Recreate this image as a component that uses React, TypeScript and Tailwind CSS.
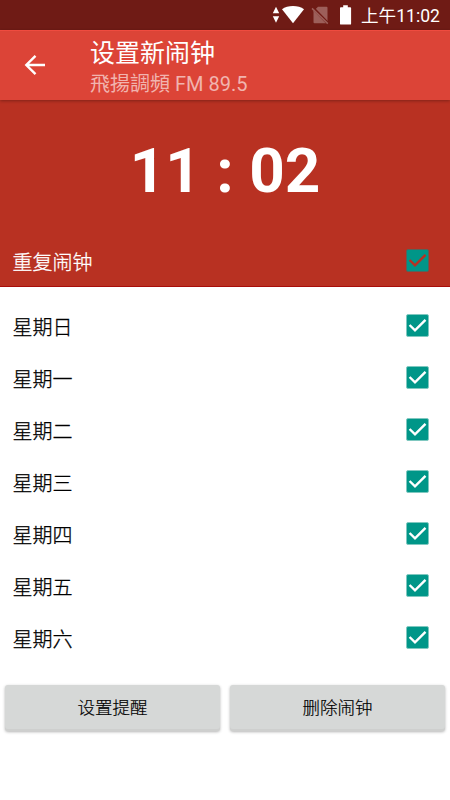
const days = ['星期日', '星期一', '星期二', '星期三', '星期四', '星期五', '星期六'];

function CheckBox({ mark, edge }: { mark: string; edge: string }) {
  return (
    <svg width="23" height="23" viewBox="0 0 23 23" className="mb-px block">
      <rect x="0.5" y="0.5" width="22" height="22" rx="1.5" fill="#009688" stroke={edge} strokeWidth="1" />
      <path d="M3.600 11 9 16.400 19.500 5.900" fill="none" stroke={mark} strokeWidth="2.400" />
    </svg>
  );
}

function StatusBar() {
  return (
    <header className="flex h-[30px] items-center justify-end bg-[#6f1b15] pr-[10px] text-white">
      <svg width="84" height="30" viewBox="0 0 84 30" className="mr-[5px] block">
        <path d="M4 6.8 7.2 13.300H.8zM4 22.800.8 16.300h6.400z" fill="#fff" />
        <path d="M10 9.200C15.500 4.800 26.500 4.800 32 9.200L21 23.200z" fill="#fff" />
        <path d="M46 6.800h8.500q1 0 1 1v14.400q0 1-1 1H42.500q-1 0-1-1V11.300z" fill="#9d5f5a" />
        <path d="m40.300 7.200 16 16.500" stroke="#6f1b15" strokeWidth="3" />
        <path d="m40 8.400 15.800 15.200" stroke="#9d5f5a" strokeWidth="1.500" />
        <path d="M71.200 5.200h4.600v2h2.400q.9 0 .9.900v15.600q0 .9-.9.900h-9.300q-.9 0-.9-.9V8.100q0-.9.900-.9h2.300z" fill="#fff" />
      </svg>
      <span className="mt-[2px] text-[17.6px] leading-[30px]">上午11:02</span>
    </header>
  );
}

export default function App() {
  return (
    <div className="h-[800px] w-[450px] overflow-hidden bg-white font-[Roboto,'Noto_Sans_CJK_SC',sans-serif] text-black">
      <StatusBar />
      <div className="relative flex h-[70px] bg-[#dc4437] shadow-[0_1px_3px_rgba(0,0,0,0.3),inset_0_1px_0_#ef4b3f]">
        <svg width="22" height="22" viewBox="0 0 22 22" className="mt-[24px] ml-[24px] block shrink-0">
          <path d="M21 11H3M11.500 1.800 2.300 11l9.200 9.200" fill="none" stroke="#fff" strokeWidth="2.400" />
        </svg>
        <div className="mt-[8px] ml-[44px] whitespace-nowrap">
          <h1 className="text-[25px] leading-[32px] text-white">设置新闹钟</h1>
          <p className="text-[20px] leading-[28px] text-[#f1b4af]">飛揚調頻 FM 89.5</p>
        </div>
      </div>
      <section className="h-[187px] border-b border-[#a80d0a] bg-[#b83122] text-white">
        <div className="flex h-[136px] items-center justify-center pt-[5px] text-[62px] font-bold">11 : 02</div>
        <div className="flex h-[50px] items-center justify-between pr-[21px] pl-[12.5px]">
          <span className="pt-[3px] text-[20px] font-light [-webkit-text-stroke:0.3px]">重复闹钟</span>
          <CheckBox mark="#b83122" edge="#57635a" />
        </div>
      </section>
      <ul className="pt-[13px]">
        {days.map((day) => (
          <li key={day} className="flex h-[52px] items-center justify-between pr-[21px] pl-[12.5px]">
            <span className="pt-[3px] text-[20px] font-light [-webkit-text-stroke:0.3px]">{day}</span>
            <CheckBox mark="#fff" edge="#80c8c0" />
          </li>
        ))}
      </ul>
      <div className="mt-[21px] flex gap-[10px] px-[5px]">
        {['设置提醒', '删除闹钟'].map((label) => (
          <button
            key={label}
            className="h-[46px] flex-1 rounded-[3px] bg-[#d6d8d7] text-[17.5px] font-light shadow-[0_1px_3px_rgba(0,0,0,0.3),inset_0_-2px_0_#cecfce] [-webkit-text-stroke:0.2px]"
          >
            {label}
          </button>
        ))}
      </div>
    </div>
  );
}
